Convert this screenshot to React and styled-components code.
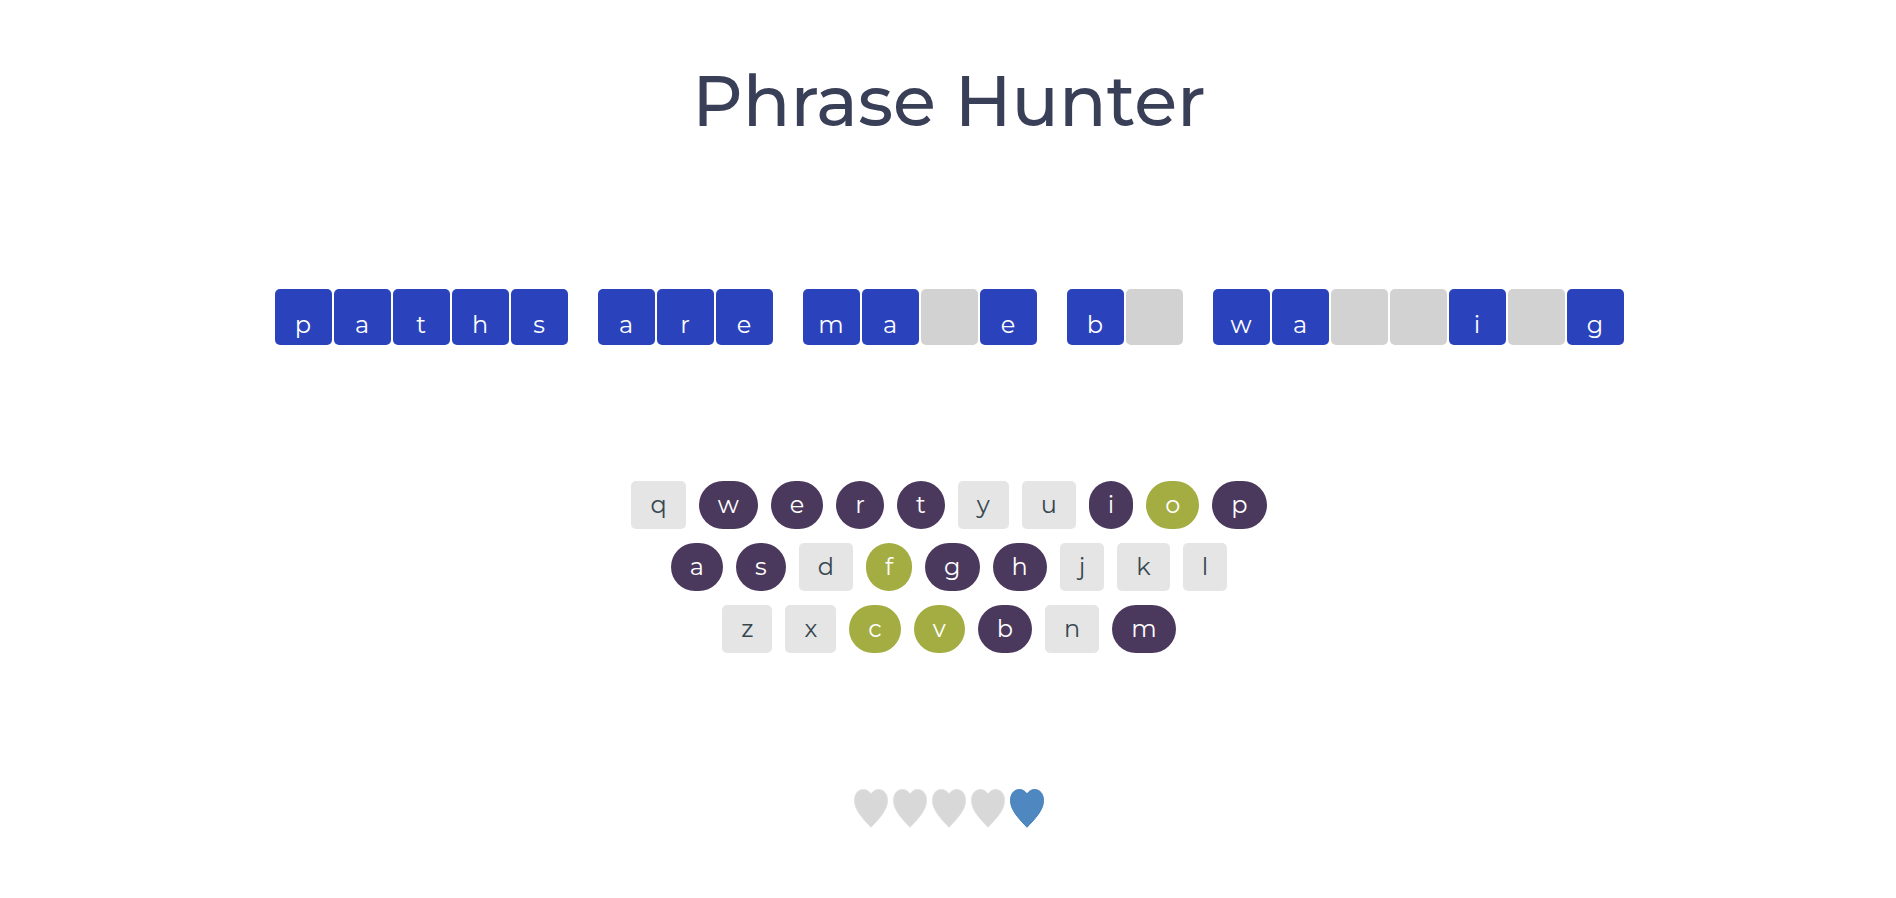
import React, { useState } from "react";
import styled, { createGlobalStyle, css } from "styled-components";

const GlobalStyle = createGlobalStyle`
  * { box-sizing: border-box; }
  body {
    margin: 0;
    background: #fff;
    font-family: Montserrat, Inter, sans-serif;
    font-size: 24px;
    line-height: 30px;
  }
`;

const Page = styled.main`
  display: flex;
  flex-direction: column;
  align-items: center;
  padding: 56px 22px 68px 24px;
`;

const Title = styled.h1`
  margin: 0;
  color: #3a3f58;
  font-size: 70px;
  font-weight: 500;
  line-height: 90px;
`;

const Phrase = styled.section`
  display: flex;
  flex-wrap: wrap;
  justify-content: center;
  gap: 2px 30px;
  margin-top: 143px;
`;

const Word = styled.div`
  display: flex;
  gap: 2px;
`;

const Tile = styled.span`
  width: 57px;
  height: 56px;
  padding-top: 21px;
  border-radius: 5px;
  background: ${(p) => (p.$shown ? "#2a43bd" : "#d2d2d2")};
  color: #fff;
  text-align: center;
`;

const Keyboard = styled.section`
  display: flex;
  flex-direction: column;
  gap: 14px;
  margin-top: 136px;
`;

const KeyRow = styled.div`
  display: flex;
  justify-content: center;
  gap: 13px;
`;

const keyStates = {
  idle: css`
    border-radius: 5px;
    background: #e5e5e5;
    color: #37474f;
  `,
  chosen: css`
    border-radius: 24px;
    background: #4b385d;
    color: #fff;
  `,
  wrong: css`
    border-radius: 24px;
    background: #a3ad42;
    color: #fff;
  `,
};

const Key = styled.button`
  height: 48px;
  padding: 0 19px;
  border: 0;
  font: inherit;
  cursor: pointer;
  ${(p) => keyStates[p.$state]}
`;

const Lives = styled.ol`
  display: flex;
  gap: 5px;
  margin: 136px 0 0;
  padding: 0;
  list-style: none;
`;

const Life = styled.li`
  display: flex;
`;

const Heart = styled.svg`
  width: 34px;
  height: 39px;
  fill: ${(p) => (p.$full ? "#4f87c0" : "#d8d8d8")};
  stroke: ${(p) => (p.$full ? "#4681bd" : "#e0e0e0")};
`;

const phrase = ["paths", "are", "made", "by", "walking"];
const rows = ["qwertyuiop", "asdfghjkl", "zxcvbnm"];
const firstGuesses = "wertipasghbmofcv";

export default function App() {
  const [guesses, setGuesses] = useState(firstGuesses);
  const inPhrase = (letter) => phrase.join("").includes(letter);
  const misses = [...guesses].filter((l) => !inPhrase(l)).length;

  const stateOf = (letter) => {
    if (!guesses.includes(letter)) return "idle";
    return inPhrase(letter) ? "chosen" : "wrong";
  };

  return (
    <>
      <GlobalStyle />
      <Page>
        <Title>Phrase Hunter</Title>
        <Phrase>
          {phrase.map((word) => (
            <Word key={word}>
              {[...word].map((letter, i) => (
                <Tile key={i} $shown={guesses.includes(letter)}>
                  {guesses.includes(letter) ? letter : ""}
                </Tile>
              ))}
            </Word>
          ))}
        </Phrase>
        <Keyboard>
          {rows.map((row) => (
            <KeyRow key={row}>
              {[...row].map((letter) => (
                <Key
                  key={letter}
                  type="button"
                  $state={stateOf(letter)}
                  onClick={() => !guesses.includes(letter) && setGuesses(guesses + letter)}
                >
                  {letter}
                </Key>
              ))}
            </KeyRow>
          ))}
        </Keyboard>
        <Lives>
          {[0, 1, 2, 3, 4].map((n) => (
            <Life key={n}>
              <Heart $full={n >= misses} viewBox="0 0 34 39" aria-hidden="true">
                <path d="M17 5C15 2 12.500 .5 9.500 .5C4 .5 .5 5 .5 11.500C.5 16.500 2.500 20.500 5.500 25C9 30 13 34 17 38.300C21 34 25 30 28.500 25C31.500 20.500 33.500 16.500 33.500 11.500C33.500 5 30 .5 24.500 .5C21.500 .5 19 2 17 5Z" />
              </Heart>
            </Life>
          ))}
        </Lives>
      </Page>
    </>
  );
}
